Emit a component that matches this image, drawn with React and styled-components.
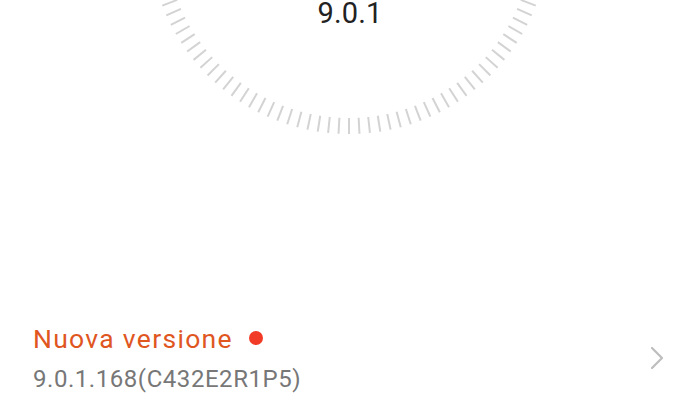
import React from 'react'
import styled, { createGlobalStyle } from 'styled-components'

const GlobalStyle = createGlobalStyle`
  html, body {
    margin: 0;
    padding: 0;
    background: #ffffff;
  }
  body {
    font-family: Roboto, "Noto Sans", "Liberation Sans", sans-serif;
  }
`

const Screen = styled.div`
  width: 700px;
  height: 400px;
  overflow: hidden;
  display: flex;
  flex-direction: column;
  background: #fff;
`

const DialWrap = styled.div`
  position: relative;
  height: 140px;
  flex-shrink: 0;
`

const CurrentVersion = styled.div`
  position: absolute;
  top: 0;
  left: 0;
  right: 0;
  text-align: center;
  font-size: 29px;
  line-height: 26px;
  color: #222;
  letter-spacing: 0.2px;
`

const Spacer = styled.div`
  flex: 1;
`

const UpdateRow = styled.div`
  display: flex;
  align-items: center;
  justify-content: space-between;
  padding: 0 36px 7px 33px;
`

const TextCol = styled.div`
  display: flex;
  flex-direction: column;
  gap: 12px;
`

const Title = styled.div`
  display: flex;
  align-items: center;
  gap: 16px;
  font-size: 26.5px;
  letter-spacing: 1.3px;
  color: #e0561f;
  line-height: 28px;
`

const Dot = styled.span`
  width: 14px;
  height: 14px;
  border-radius: 50%;
  background: #f23b27;
  display: inline-block;
  margin-top: -2px;
`

const Build = styled.div`
  font-size: 24px;
  letter-spacing: 0.55px;
  color: #777;
  line-height: 28px;
`

const Chevron = styled.svg`
  width: 14px;
  height: 24px;
  margin-top: -2px;
`

const Dial = () => {
  const cx = 349
  const cy = -66
  const ticks = []
  for (let i = 0; i < 120; i++) {
    const a = (i * 3 * Math.PI) / 180
    const c = Math.cos(a)
    const s = Math.sin(a)
    ticks.push(
      <line
        key={i}
        x1={cx + c * 184}
        y1={cy + s * 184}
        x2={cx + c * 200}
        y2={cy + s * 200}
        stroke="#d3d3d3"
        strokeWidth="2"
      />
    )
  }
  return (
    <svg width="700" height="140" viewBox="0 0 700 140" style={{ display: 'block' }}>
      {ticks}
    </svg>
  )
}

const App = () => {
  return (
    <Screen>
      <GlobalStyle />
      <DialWrap>
        <Dial />
        <CurrentVersion>9.0.1</CurrentVersion>
      </DialWrap>
      <Spacer />
      <UpdateRow>
        <TextCol>
          <Title>
            Nuova versione
            <Dot />
          </Title>
          <Build>9.0.1.168(C432E2R1P5)</Build>
        </TextCol>
        <Chevron viewBox="0 0 14 24">
          <polyline points="2,2 12,12 2,22" fill="none" stroke="#bdbdbd" strokeWidth="2.2" strokeLinecap="round" strokeLinejoin="round" />
        </Chevron>
      </UpdateRow>
    </Screen>
  )
}

export default App
